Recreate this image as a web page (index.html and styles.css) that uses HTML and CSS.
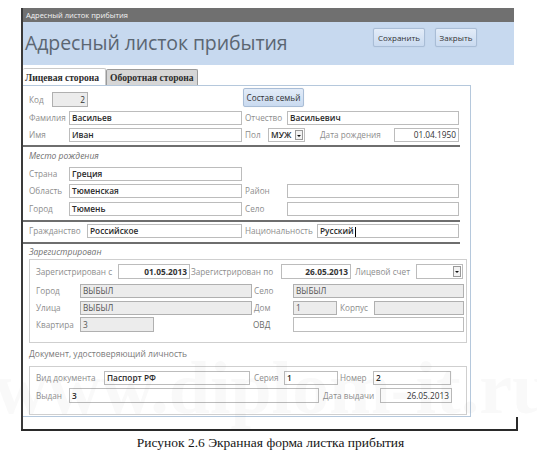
FILE: index.html
```html
<!DOCTYPE html>
<html lang="ru">
<head>
<meta charset="utf-8">
<title>Адресный листок прибытия</title>
<link rel="stylesheet" href="styles.css">
</head>
<body>
<div class="page">
  <div class="window">
    <div class="titlebar">Адресный листок прибытия</div>
    <div class="header">
      <div class="form-title">Адресный листок прибытия</div>
      <div class="header-buttons">
        <button class="btn btn-save">Сохранить</button>
        <button class="btn btn-close">Закрыть</button>
      </div>
    </div>
    <div class="tabs">
      <div class="tab tab-active">Лицевая сторона</div>
      <div class="tab">Оборотная сторона</div>
    </div>
    <div class="panel">
      <div class="row r1">
        <span class="lbl w23">Код</span>
        <span class="fld gray num w36 h15">2</span>
        <button class="btn btn-family">Состав семьй</button>
      </div>
      <div class="row r2">
        <span class="lbl w40">Фамилия</span>
        <span class="fld w173">Васильев</span>
        <span class="lbl w45 p3">Отчество</span>
        <span class="fld w172">Васильевич</span>
      </div>
      <div class="row r3">
        <span class="lbl w40">Имя</span>
        <span class="fld w173">Иван</span>
        <span class="lbl w26 p3">Пол</span>
        <span class="fld combo w37">МУЖ<span class="dd"></span></span>
        <span class="lbl w89 p15">Дата рождения</span>
        <span class="fld num w65">01.04.1950</span>
      </div>
      <div class="sep s1"></div>
      <div class="section sec1">Место рождения</div>
      <div class="row r4">
        <span class="lbl w40">Страна</span>
        <span class="fld w173">Греция</span>
      </div>
      <div class="row r5">
        <span class="lbl w40">Область</span>
        <span class="fld w173">Тюменская</span>
        <span class="lbl w45 p3">Район</span>
        <span class="fld w172"></span>
      </div>
      <div class="row r6">
        <span class="lbl w40">Город</span>
        <span class="fld w173">Тюмень</span>
        <span class="lbl w45 p3">Село</span>
        <span class="fld w172"></span>
      </div>
      <div class="sep s2"></div>
      <div class="row r7">
        <span class="lbl w58">Гражданство</span>
        <span class="fld w155">Российское</span>
        <span class="lbl w75 p3">Национальность</span>
        <span class="fld w142">Русский<span class="caret"></span></span>
      </div>
      <div class="sep s3"></div>
      <div class="section sec2">Зарегистрирован</div>
      <div class="box box1">
        <div class="row b1">
          <span class="lbl w82">Зарегистрирован с</span>
          <span class="fld num strong w72 h15">01.05.2013</span>
          <span class="lbl w91 p1">Зарегистрирован по</span>
          <span class="fld num strong w70 h15">26.05.2013</span>
          <span class="lbl w65 p4">Лицевой счет</span>
          <span class="fld combo w47 h15"><span class="dd"></span></span>
        </div>
        <div class="row b2">
          <span class="lbl w44">Город</span>
          <span class="fld gray w172">ВЫБЫЛ</span>
          <span class="lbl w41 p2">Село</span>
          <span class="fld gray w171">ВЫБЫЛ</span>
        </div>
        <div class="row b3">
          <span class="lbl w44">Улица</span>
          <span class="fld gray w172">ВЫБЫЛ</span>
          <span class="lbl w41 p2">Дом</span>
          <span class="fld gray w44">1</span>
          <span class="lbl w37 p3">Корпус</span>
          <span class="fld gray w90"></span>
        </div>
        <div class="row b4">
          <span class="lbl w44">Квартира</span>
          <span class="fld gray w74 h15">3</span>
          <span class="lbl w139 p99 dark">ОВД</span>
          <span class="fld w171 h15"></span>
        </div>
      </div>
      <div class="section plain sec3">Документ, удостоверяющий личность</div>
      <div class="box box2">
        <div class="row d1">
          <span class="lbl w68">Вид документа</span>
          <span class="fld w146">Паспорт РФ</span>
          <span class="lbl w34 p4">Серия</span>
          <span class="fld w54">1</span>
          <span class="lbl w35 p2">Номер</span>
          <span class="fld w78">2</span>
        </div>
        <div class="row d2">
          <span class="lbl w33">Выдан</span>
          <span class="fld w250 h15">3</span>
          <span class="lbl w61 p4">Дата выдачи</span>
          <span class="fld num w72 h15">26.05.2013</span>
        </div>
      </div>
    </div>
    <div class="window-bottom"></div>
  </div>
  <div class="caption">Рисунок 2.6 Экранная форма листка прибытия</div>
  <div class="watermark" aria-hidden="true">www.diplom-it.ru</div>
</div>
</body>
</html>
```

FILE: styles.css
```css
html, body {
  margin: 0;
  padding: 0;
  background: #ffffff;
}

.page {
  position: relative;
  width: 537px;
  height: 460px;
  overflow: hidden;
  font-family: "Open Sans", "Noto Sans", sans-serif;
}

.window {
  margin: 8px 0 0 21px;
  width: 493px;
  border-left: 2px solid #3a3a3a;
}

.titlebar {
  height: 14px;
  width: 491px;
  background: #707070;
  color: #f4f4f4;
  font-size: 7.5px;
  line-height: 14px;
  padding-left: 3px;
  box-sizing: border-box;
}

.header {
  height: 43px;
  width: 491px;
  background: #c7d9ef;
  display: flex;
  align-items: flex-start;
  justify-content: space-between;
  box-sizing: border-box;
}

.form-title {
  margin: 8px 0 0 2px;
  font-size: 19.5px;
  line-height: 26px;
  color: #5b6672;
  letter-spacing: -0.1px;
}

.header-buttons {
  display: flex;
  gap: 10px;
  margin: 6px 37px 0 0;
}

.btn {
  font-family: "Open Sans", "Noto Sans", sans-serif;
  font-size: 8px;
  color: #333;
  background: linear-gradient(#e3ecf8, #c9daf0);
  border: 1px solid #a9bdd6;
  border-radius: 2px;
  padding: 0;
  height: 19px;
  box-sizing: border-box;
  box-shadow: 0 0 1px rgba(0,0,0,0.15);
}

.btn-save { width: 52px; }
.btn-close { width: 42px; }

.tabs {
  display: flex;
  margin-top: 3px;
  height: 17px;
  align-items: flex-end;
}

.tab {
  font-family: "Liberation Serif", "DejaVu Serif", serif;
  font-weight: bold;
  font-size: 9.6px;
  color: #2c2c2c;
  white-space: nowrap;
  height: 16px;
  line-height: 16px;
  padding: 0 3px;
  box-sizing: border-box;
  background: #d6d6d6;
  border: 1px solid #9a9a9a;
  border-bottom: none;
  border-radius: 2px 2px 0 0;
  overflow: hidden;
}

.tab-active {
  width: 83px;
  height: 17px;
  line-height: 17px;
  background: #ffffff;
  border-color: #c9c9c9;
  border-left: none;
  padding-left: 2px;
}

.tab + .tab { width: 92px; }

.panel {
  width: 448px;
  box-sizing: border-box;
  border: 1px solid #b5c8dc;
  border-left: none;
  padding: 0 0 1px 0;
}

.row {
  display: flex;
  align-items: center;
  height: 14px;
  padding-left: 6px;
}

.r1 { margin-top: 2px; height: 19px; align-items: flex-end; }
.r2 { margin-top: 4px; }
.r3 { margin-top: 3px; }
.r4 { margin-top: 5px; }
.r5 { margin-top: 3px; }
.r6 { margin-top: 4px; }
.r7 { margin-top: 2px; }

.sep {
  width: 437px;
  height: 2px;
  background: #6e6e6e;
}
.s1 { margin-top: 3px; }
.s2 { margin-top: 4px; }
.s3 { margin-top: 4px; }

.section {
  font-style: italic;
  font-size: 8.5px;
  color: #6f6f6f;
  height: 12px;
  line-height: 12px;
  padding-left: 6px;
}
.section.plain { font-style: normal; color: #7a7a7a; }
.sec1 { margin-top: 3px; }
.sec2 { margin-top: 2px; }
.sec3 { margin-top: 5px; }

.box {
  margin-left: 6px;
  width: 438px;
  box-sizing: border-box;
  border: 1px solid #cfcfcf;
}
.box .row { padding-left: 6px; }
.box1 { margin-top: 1px; padding-bottom: 10px; }
.box2 { margin-top: 6px; padding-bottom: 11px; }

.b1 { margin-top: 4px; height: 15px; }
.b2 { margin-top: 5px; }
.b3 { margin-top: 3px; }
.b4 { margin-top: 2px; height: 15px; }
.d1 { margin-top: 4px; }
.d2 { margin-top: 3px; height: 15px; }

.lbl {
  flex: none;
  font-size: 8.2px;
  color: #8d8d8d;
  white-space: nowrap;
  box-sizing: border-box;
  line-height: 14px;
}
.lbl.dark { color: #6a6a6a; }

.fld {
  flex: none;
  position: relative;
  height: 14px;
  box-sizing: border-box;
  border: 1px solid #bcbcbc;
  background: #ffffff;
  font-size: 8.3px;
  font-weight: 600;
  color: #2a2a2a;
  line-height: 12px;
  padding: 0 2px;
  white-space: nowrap;
  overflow: hidden;
}
.fld.gray { background: #ececec; border-color: #b0b0b0; font-weight: 400; color: #555; }
.fld.num { text-align: right; font-weight: 400; color: #333; }
.fld.num.strong { font-weight: 700; color: #333; }
.fld.h15 { height: 15px; line-height: 13px; }

.fld.combo { padding-right: 10px; }
.dd {
  position: absolute;
  right: 1px;
  top: 1px;
  bottom: 1px;
  width: 8px;
  box-sizing: border-box;
  border: 1px solid #9a9a9a;
  background: #f2f2f2;
}
.dd::after {
  content: "";
  position: absolute;
  left: 1px;
  top: 4px;
  border-left: 2px solid transparent;
  border-right: 2px solid transparent;
  border-top: 2px solid #111;
}

.caret {
  display: inline-block;
  width: 1px;
  height: 10px;
  background: #000;
  vertical-align: middle;
  margin-left: 1px;
}

.btn-family {
  width: 61px;
  margin-left: 155px;
  align-self: flex-start;
  font-size: 8.2px;
}

.w23 { width: 23px; }
.w26 { width: 26px; }
.w33 { width: 33px; }
.w34 { width: 34px; }
.w35 { width: 35px; }
.w36 { width: 36px; }
.w37 { width: 37px; }
.w40 { width: 40px; }
.w41 { width: 41px; }
.w44 { width: 44px; }
.w45 { width: 45px; }
.w47 { width: 47px; }
.w54 { width: 54px; }
.w58 { width: 58px; }
.w61 { width: 61px; }
.w65 { width: 65px; }
.w68 { width: 68px; }
.w70 { width: 70px; }
.w72 { width: 72px; }
.w74 { width: 74px; }
.w75 { width: 75px; }
.w78 { width: 78px; }
.w82 { width: 82px; }
.w89 { width: 89px; }
.w90 { width: 90px; }
.w91 { width: 91px; }
.w139 { width: 139px; }
.w142 { width: 142px; }
.w146 { width: 146px; }
.w155 { width: 155px; }
.w171 { width: 171px; }
.w172 { width: 172px; }
.w173 { width: 173px; }
.w250 { width: 250px; }

.p1 { padding-left: 1px; }
.p2 { padding-left: 2px; }
.p3 { padding-left: 3px; }
.p4 { padding-left: 4px; }
.p15 { padding-left: 15px; }
.p99 { padding-left: 99px; }

.window-bottom {
  height: 12px;
  border-right: 2px solid #2a2a2a;
  border-bottom: 2px solid #2a2a2a;
  margin-left: -2px;
  width: 495px;
  box-sizing: content-box;
}

.caption {
  margin-top: 4px;
  text-align: center;
  padding-left: 4px;
  font-family: "Liberation Serif", "DejaVu Serif", serif;
  font-size: 13.5px;
  color: #161616;
  line-height: 16px;
}

.watermark {
  position: absolute;
  left: -6px;
  top: 348px;
  font-family: "Liberation Serif", serif;
  font-weight: bold;
  font-size: 74px;
  line-height: 80px;
  color: rgba(120, 120, 120, 0.045);
  white-space: nowrap;
  pointer-events: none;
}
```
